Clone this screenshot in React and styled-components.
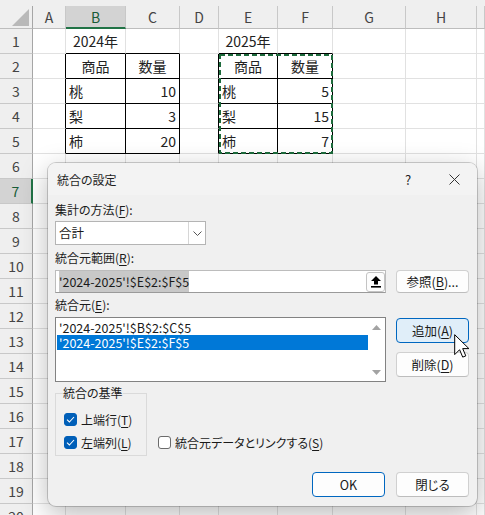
import React from "react";
import styled, { createGlobalStyle, css } from "styled-components";

const GlobalStyle = createGlobalStyle`
  html, body {
    margin: 0;
    padding: 0;
    background: #ffffff;
  }
  body {
    font-family: "Noto Sans CJK JP", "Noto Sans", sans-serif;
  }
`;

// 列幅 (行見出し, A..H, 残り)
const COL_WIDTHS = [33, 33, 60, 54, 39, 59, 55, 73, 71];
const COL_NAMES = ["A", "B", "C", "D", "E", "F", "G", "H", ""];
const ROW_COUNT = 20;

const CELLS = {
  "1-B": { text: "2024年", align: "center" },
  "1-E": { text: "2025年", align: "center" },
  "2-B": { text: "商品", align: "center" },
  "2-C": { text: "数量", align: "center" },
  "2-E": { text: "商品", align: "center" },
  "2-F": { text: "数量", align: "center" },
  "3-B": { text: "桃" },
  "3-C": { text: "10", align: "right" },
  "4-B": { text: "梨" },
  "4-C": { text: "3", align: "right" },
  "5-B": { text: "柿" },
  "5-C": { text: "20", align: "right" },
  "3-E": { text: "桃" },
  "3-F": { text: "5", align: "right" },
  "4-E": { text: "梨" },
  "4-F": { text: "15", align: "right" },
  "5-E": { text: "柿" },
  "5-F": { text: "7", align: "right" },
};

// 罫線つきの表 (列番号は A=1)
const TABLES = [
  { c0: 2, c1: 3, r0: 2, r1: 5 },
  { c0: 5, c1: 6, r0: 2, r1: 5 },
];

const hasRight = (r, c) =>
  TABLES.some((t) => r >= t.r0 && r <= t.r1 && c >= t.c0 - 1 && c <= t.c1);
const hasBottom = (r, c) =>
  TABLES.some((t) => c >= t.c0 && c <= t.c1 && r >= t.r0 - 1 && r <= t.r1);

const Sheet = styled.div`
  position: relative;
  width: 485px;
  height: 515px;
  overflow: hidden;
  background: #fff;
`;

const Grid = styled.div`
  display: grid;
  grid-template-columns: ${COL_WIDTHS.map((w) => w + "px").join(" ")} 1fr;
  grid-template-rows: 6px 23px repeat(${ROW_COUNT}, 25px);
`;

const TopStrip = styled.div`
  grid-row: 1;
  grid-column: 1 / -1;
  background: #efefef;
`;

const Corner = styled.div`
  grid-row: 2;
  grid-column: 1;
  background: #efefef;
  border-right: 1px solid #a6a6a6;
  border-bottom: 1px solid #bdbdbd;
  box-sizing: border-box;
  position: relative;

  svg {
    position: absolute;
    right: 3px;
    bottom: 2px;
  }
`;

const ColHeader = styled.div`
  grid-row: 2;
  grid-column: ${(p) => p.$c};
  box-sizing: border-box;
  background: ${(p) => (p.$selected ? "#d3d3d3" : "#efefef")};
  border-right: 1px solid #c8c8c8;
  border-bottom: ${(p) =>
    p.$selected ? "2px solid #217346" : "1px solid #bdbdbd"};
  color: ${(p) => (p.$selected ? "#185c37" : "#444")};
  font-size: 14px;
  line-height: 22px;
  text-align: center;
`;

const RowHeader = styled.div`
  grid-row: ${(p) => p.$r};
  grid-column: 1;
  box-sizing: border-box;
  background: ${(p) => (p.$selected ? "#d3d3d3" : "#efefef")};
  border-bottom: 1px solid #c8c8c8;
  border-right: ${(p) =>
    p.$selected ? "2px solid #217346" : "1px solid #a6a6a6"};
  color: ${(p) => (p.$selected ? "#185c37" : "#444")};
  font-size: 14px;
  line-height: 24px;
  text-align: center;
`;

const Cell = styled.div`
  grid-row: ${(p) => p.$r};
  grid-column: ${(p) => p.$c};
  box-sizing: border-box;
  border-right: 1px solid ${(p) => (p.$br ? "#000" : "#e1e1e1")};
  border-bottom: 1px solid ${(p) => (p.$bb ? "#000" : "#e1e1e1")};
  padding: 0 3px;
  font-size: 14px;
  line-height: 24px;
  color: #222;
  text-align: ${(p) => p.$align || "left"};
  white-space: nowrap;
  overflow: hidden;
`;

const CopyMarquee = styled.div`
  grid-row: 4 / 8;
  grid-column: 6 / 8;
  pointer-events: none;
  z-index: 1;

  svg {
    display: block;
  }
`;

/* ---------- ダイアログ ---------- */

const Dialog = styled.div`
  position: absolute;
  left: 48px;
  top: 163px;
  width: 429px;
  background: #f0f0f0;
  border-radius: 8px;
  box-shadow: 0 0 0 1px rgba(0, 0, 0, 0.18), 0 8px 28px rgba(0, 0, 0, 0.28);
  overflow: hidden;
  z-index: 2;
  color: #1a1a1a;
  font-family: "Noto Sans CJK JP", "Noto Sans", sans-serif;
  font-feature-settings: "palt";
  font-size: 12px;

  u {
    text-underline-offset: 2px;
  }
`;

const TitleBar = styled.div`
  display: flex;
  align-items: center;
  height: 32px;
  background: #f3f3f3;
`;

const Title = styled.div`
  flex: 1;
  padding-left: 9px;
  font-size: 12px;
  color: #1f1f1f;
`;

const TitleButton = styled.div`
  width: 46px;
  height: 32px;
  display: flex;
  align-items: center;
  justify-content: center;
  font-size: 13px;
  color: #222;
`;

const Body = styled.div`
  padding: 6px 8px 9px 7px;
  display: flex;
  flex-direction: column;
`;

const Label = styled.div`
  line-height: 18px;
  height: 18px;
  margin-top: ${(p) => p.$mt || 0}px;
`;

const Select = styled.div`
  margin-top: 2px;
  width: 151px;
  height: 24px;
  box-sizing: border-box;
  background: #fff;
  border: 1px solid #b4b4b4;
  display: flex;
`;

const SelectValue = styled.div`
  flex: 1;
  padding-left: 3px;
  line-height: 22px;
  font-size: 12.5px;
`;

const SelectArrow = styled.div`
  width: 16px;
  border-left: 1px solid #d6d6d6;
  display: flex;
  align-items: center;
  justify-content: center;
`;

const Row = styled.div`
  display: flex;
  gap: 10px;
  margin-top: 3px;
`;

const RangeInput = styled.div`
  width: 331px;
  height: 23px;
  box-sizing: border-box;
  background: #fff;
  border: 1px solid #bcbcbc;
  border-bottom-color: #9a9a9a;
  display: flex;
  align-items: center;
  padding-left: 3px;
`;

const Highlighted = styled.span`
  flex: 1;
  span {
    background: #c8c8c8;
    font-size: 12.5px;
    line-height: 16px;
    padding: 1px 0;
  }
`;

const Collapse = styled.div`
  width: 19px;
  height: 20px;
  box-sizing: border-box;
  border: 1px solid #c4c4c4;
  border-radius: 3px;
  background: #fdfdfd;
  display: flex;
  align-items: center;
  justify-content: center;
`;

const Button = styled.div`
  width: 73px;
  height: ${(p) => p.$h || 25}px;
  box-sizing: border-box;
  border-radius: 4px;
  background: #fdfdfd;
  border: 1px solid #d0d0d0;
  border-bottom-color: #bdbdbd;
  display: flex;
  align-items: center;
  justify-content: center;
  font-size: 12.5px;
  color: #1a1a1a;

  ${(p) =>
    p.$default &&
    css`
      border-color: #0067c0;
    `}

  ${(p) =>
    p.$hover &&
    css`
      background: #e0eef9;
      border-color: #0067c0;
    `}
`;

const ListBox = styled.div`
  width: 331px;
  height: 65px;
  box-sizing: border-box;
  background: #fff;
  border: 1px solid #828282;
  display: flex;
`;

const ListItems = styled.div`
  flex: 1;
  padding: 2px 0 0 1px;
`;

const ListItem = styled.div`
  height: 15px;
  line-height: 15px;
  padding-left: 2px;
  font-size: 12.5px;
  white-space: nowrap;
  background: ${(p) => (p.$selected ? "#0078d7" : "transparent")};
  color: ${(p) => (p.$selected ? "#fff" : "#1a1a1a")};
`;

const ScrollBar = styled.div`
  width: 17px;
  display: flex;
  flex-direction: column;
  justify-content: space-between;
  align-items: center;
  padding: 7px 0 6px;
`;

const SideButtons = styled.div`
  display: flex;
  flex-direction: column;
  gap: 9px;
  padding-top: 1px;
`;

const OptionsRow = styled.div`
  display: flex;
  align-items: flex-end;
  margin-top: 2px;
`;

const Group = styled.fieldset`
  margin: 0;
  width: 92px;
  box-sizing: border-box;
  border: 1px solid #dadada;
  padding: 6px 6px 1px 6px;

  legend {
    padding: 0;
    line-height: 18px;
    font-size: 12px;
    margin-left: 1px;
  }
`;

const CheckRow = styled.div`
  display: flex;
  align-items: center;
  gap: 4px;
  height: 23px;
  margin-left: ${(p) => p.$ml || 0}px;
  margin-bottom: ${(p) => p.$mb || 0}px;
  white-space: nowrap;
`;

const Box = styled.span`
  width: 13px;
  height: 13px;
  box-sizing: border-box;
  border-radius: 3px;
  display: flex;
  align-items: center;
  justify-content: center;
  background: ${(p) => (p.$checked ? "#005fb8" : "#fff")};
  border: 1px solid ${(p) => (p.$checked ? "#005fb8" : "#6b6b6b")};
`;

const Footer = styled.div`
  display: flex;
  justify-content: flex-end;
  gap: 11px;
  margin-top: 16px;
`;

const Cursor = styled.svg`
  position: absolute;
  left: 454px;
  top: 334px;
  z-index: 3;
`;

const CheckOption = ({ checked, children, ml, mb }) => (
  <CheckRow $ml={ml} $mb={mb}>
    <Box $checked={checked}>
      {checked && (
        <svg width="9" height="7" viewBox="0 0 9 7">
          <path d="M1 3.6 L3.4 6 L8 1" fill="none" stroke="#fff" strokeWidth="1.1" />
        </svg>
      )}
    </Box>
    <span>{children}</span>
  </CheckRow>
);

const App = () => {
  const cells = [];
  for (let r = 1; r <= ROW_COUNT; r++) {
    for (let c = 1; c <= COL_NAMES.length; c++) {
      const key = `${r}-${COL_NAMES[c - 1]}`;
      const data = CELLS[key];
      cells.push(
        <Cell
          key={key}
          $r={r + 2}
          $c={c + 1}
          $br={hasRight(r, c)}
          $bb={hasBottom(r, c)}
          $align={data && data.align}
        >
          {data && data.text}
        </Cell>
      );
    }
  }

  return (
    <>
      <GlobalStyle />
      <Sheet>
        <Grid>
          <TopStrip />
          <Corner>
            <svg width="17" height="17" viewBox="0 0 17 17">
              <polygon points="17,0 17,17 0,17" fill="#b9b9b9" />
            </svg>
          </Corner>
          {COL_NAMES.map((name, i) => (
            <ColHeader key={"h" + i} $c={i + 2} $selected={name === "B"}>
              {name}
            </ColHeader>
          ))}
          {Array.from({ length: ROW_COUNT }, (_, i) => (
            <RowHeader key={"r" + i} $r={i + 3} $selected={i + 1 === 7}>
              {i + 1}
            </RowHeader>
          ))}
          {cells}
          <CopyMarquee>
            <svg width="114" height="100" viewBox="0 0 114 100" shapeRendering="crispEdges">
              <rect
                x="1"
                y="1"
                width="112"
                height="98"
                fill="none"
                stroke="#1d6b3c"
                strokeWidth="2"
                strokeDasharray="5 3"
              />
            </svg>
          </CopyMarquee>
        </Grid>

        <Dialog>
          <TitleBar>
            <Title>統合の設定</Title>
            <TitleButton>?</TitleButton>
            <TitleButton>
              <svg width="11" height="11" viewBox="0 0 11 11">
                <path d="M0.5 0.5 L10.5 10.5 M10.5 0.5 L0.5 10.5" stroke="#333" strokeWidth="1" />
              </svg>
            </TitleButton>
          </TitleBar>

          <Body>
            <Label>
              集計の方法(<u>F</u>):
            </Label>
            <Select>
              <SelectValue>合計</SelectValue>
              <SelectArrow>
                <svg width="9" height="5" viewBox="0 0 9 5">
                  <path d="M0.5 0.5 L4.5 4.5 L8.5 0.5" fill="none" stroke="#555" strokeWidth="1" />
                </svg>
              </SelectArrow>
            </Select>

            <Label $mt={4}>
              統合元範囲(<u>R</u>):
            </Label>
            <Row>
              <RangeInput>
                <Highlighted>
                  <span>'2024-2025'!$E$2:$F$5</span>
                </Highlighted>
                <Collapse>
                  <svg width="10" height="12" viewBox="0 0 10 12">
                    <path d="M5 0 L10 5 H7 V8.5 H3 V5 H0 Z" fill="#000" />
                    <rect x="0" y="10" width="10" height="1.6" fill="#000" />
                  </svg>
                </Collapse>
              </RangeInput>
              <Button $h={23}>
                参照(<u>B</u>)...
              </Button>
            </Row>

            <Label $mt={3}>
              統合元(<u>E</u>):
            </Label>
            <Row>
              <ListBox>
                <ListItems>
                  <ListItem>'2024-2025'!$B$2:$C$5</ListItem>
                  <ListItem $selected>'2024-2025'!$E$2:$F$5</ListItem>
                </ListItems>
                <ScrollBar>
                  <svg width="9" height="5" viewBox="0 0 9 5">
                    <polygon points="0,5 4.5,0 9,5" fill="#a3a3a3" />
                  </svg>
                  <svg width="9" height="5" viewBox="0 0 9 5">
                    <polygon points="0,0 9,0 4.5,5" fill="#a3a3a3" />
                  </svg>
                </ScrollBar>
              </ListBox>
              <SideButtons>
                <Button $hover>
                  追加(<u>A</u>)
                </Button>
                <Button>
                  削除(<u>D</u>)
                </Button>
              </SideButtons>
            </Row>

            <OptionsRow>
              <Group>
                <legend>統合の基準</legend>
                <CheckOption checked ml={2}>
                  上端行(<u>T</u>)
                </CheckOption>
                <CheckOption checked ml={2}>
                  左端列(<u>L</u>)
                </CheckOption>
              </Group>
              <CheckOption ml={11} mb={2}>
                統合元データとリンクする(<u>S</u>)
              </CheckOption>
            </OptionsRow>

            <Footer>
              <Button $default>OK</Button>
              <Button>閉じる</Button>
            </Footer>
          </Body>
        </Dialog>

        <Cursor width="16" height="25" viewBox="0 0 16 25">
          <path
            d="M0.7 0.7 L0.7 20.6 L5.6 15.7 L8.7 23.1 L11.8 21.9 L8.7 14.6 L14.9 14.6 Z"
            fill="#fff"
            stroke="#000"
            strokeWidth="1"
            strokeLinejoin="round"
          />
        </Cursor>
      </Sheet>
    </>
  );
};

export default App;
